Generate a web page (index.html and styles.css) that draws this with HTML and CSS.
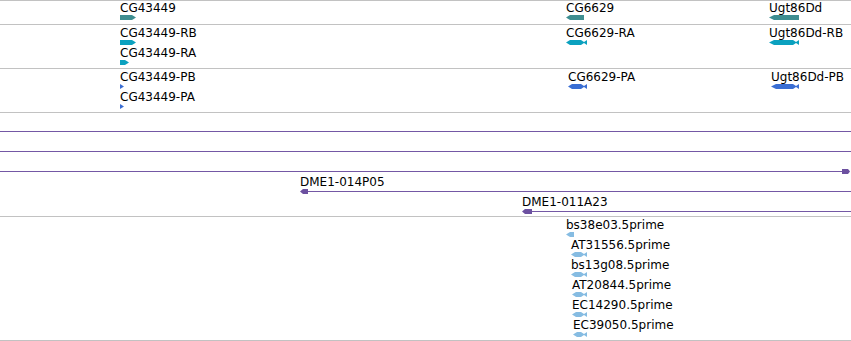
FILE: index.html
```html
<!DOCTYPE html>
<html>
<head>
<meta charset="utf-8">
<link rel="stylesheet" href="styles.css">
</head>
<body>
<div class="tracks">
  <!-- genes -->
  <div class="track rows1">
    <div class="feat" style="left:120px;top:0px">
      <div class="label">CG43449</div>
      <svg class="glyph gene" width="16" height="5"><polygon points="0,0 12,0 16,2.5 12,5 0,5"/></svg>
    </div>
    <div class="feat" style="left:566px;top:0px">
      <div class="label">CG6629</div>
      <svg class="glyph gene" width="18" height="5"><polygon points="0,2.5 4,0 18,0 18,5 4,5"/></svg>
    </div>
    <div class="feat" style="left:769px;top:0px">
      <div class="label">Ugt86Dd</div>
      <svg class="glyph gene" width="30" height="5"><polygon points="0,2.5 5,0 30,0 30,5 5,5"/></svg>
    </div>
  </div>
  <!-- transcripts -->
  <div class="track rows2">
    <div class="feat" style="left:120px;top:1px">
      <div class="label">CG43449-RB</div>
      <svg class="glyph mrna" width="16" height="5"><polygon points="0,0 12,0 16,2.5 12,5 0,5"/></svg>
    </div>
    <div class="feat" style="left:120px;top:21px">
      <div class="label">CG43449-RA</div>
      <svg class="glyph mrna" width="9" height="5"><polygon points="0,0 5,0 9,2.5 5,5 0,5"/></svg>
    </div>
    <div class="feat" style="left:566px;top:1px">
      <div class="label">CG6629-RA</div>
      <svg class="glyph mrna" width="21" height="5"><polygon points="0,2.5 4,0 15,0 18,2 21,0 21,5 18,3 15,5 4,5"/></svg>
    </div>
    <div class="feat" style="left:769px;top:1px">
      <div class="label">Ugt86Dd-RB</div>
      <svg class="glyph mrna" width="30" height="5"><polygon points="0,2.5 5,0 24,0 27,2 30,0 30,5 27,3 24,5 5,5"/></svg>
    </div>
  </div>
  <!-- proteins -->
  <div class="track rows2">
    <div class="feat" style="left:120px;top:1px">
      <div class="label">CG43449-PB</div>
      <svg class="glyph cds" width="4" height="5"><polygon points="0,0 4,2.5 0,5"/></svg>
    </div>
    <div class="feat" style="left:120px;top:21px">
      <div class="label">CG43449-PA</div>
      <svg class="glyph cds" width="4" height="5"><polygon points="0,0 4,2.5 0,5"/></svg>
    </div>
    <div class="feat" style="left:568px;top:1px">
      <div class="label">CG6629-PA</div>
      <svg class="glyph cds" width="19" height="5"><polygon points="0,2.5 4,0 13,0 16,2 19,0 19,5 16,3 13,5 4,5"/></svg>
    </div>
    <div class="feat" style="left:771px;top:1px">
      <div class="label">Ugt86Dd-PB</div>
      <svg class="glyph cds" width="28" height="5"><polygon points="0,2.5 5,0 22,0 25,2 28,0 28,5 25,3 22,5 5,5"/></svg>
    </div>
  </div>
  <!-- clones -->
  <div class="track rows5">
    <div class="feat span" style="left:0px;top:2px">
      <div class="label"></div>
      <div class="bar"><div class="rule"></div></div>
    </div>
    <div class="feat span" style="left:0px;top:22px">
      <div class="label"></div>
      <div class="bar"><div class="rule"></div></div>
    </div>
    <div class="feat span" style="left:0px;top:42px">
      <div class="label"></div>
      <div class="bar"><div class="rule"></div><svg class="clone" width="9" height="5"><polygon points="0,0 6,0 8,2.5 6,5 0,5"/></svg></div>
    </div>
    <div class="feat span" style="left:300px;top:62px">
      <div class="label">DME1-014P05</div>
      <div class="bar"><svg class="clone" width="8" height="5"><polygon points="0,2.5 3,0 8,0 8,5 3,5"/></svg><div class="rule"></div></div>
    </div>
    <div class="feat span" style="left:522px;top:82px">
      <div class="label">DME1-011A23</div>
      <div class="bar"><svg class="clone" width="10" height="5"><polygon points="0,2.5 3,0 10,0 10,5 3,5"/></svg><div class="rule"></div></div>
    </div>
  </div>
  <!-- ESTs -->
  <div class="track rows6">
    <div class="feat" style="left:566px;top:1px">
      <div class="label">bs38e03.5prime</div>
      <svg class="glyph est" width="8" height="5"><polygon points="0,2.5 4,0 8,0 8,5 4,5"/></svg>
    </div>
    <div class="feat" style="left:571px;top:21px">
      <div class="label">AT31556.5prime</div>
      <svg class="glyph est" width="16" height="5"><polygon points="0,2.5 4,0 10,0 13,2 16,0 16,5 13,3 10,5 4,5"/></svg>
    </div>
    <div class="feat" style="left:571px;top:41px">
      <div class="label">bs13g08.5prime</div>
      <svg class="glyph est" width="16" height="5"><polygon points="0,2.5 4,0 10,0 13,2 16,0 16,5 13,3 10,5 4,5"/></svg>
    </div>
    <div class="feat" style="left:572px;top:61px">
      <div class="label">AT20844.5prime</div>
      <svg class="glyph est" width="15" height="5"><polygon points="0,2.5 4,0 9,0 12,2 15,0 15,5 12,3 9,5 4,5"/></svg>
    </div>
    <div class="feat" style="left:572px;top:81px">
      <div class="label">EC14290.5prime</div>
      <svg class="glyph est" width="15" height="5"><polygon points="0,2.5 4,0 9,0 12,2 15,0 15,5 12,3 9,5 4,5"/></svg>
    </div>
    <div class="feat" style="left:573px;top:101px">
      <div class="label">EC39050.5prime</div>
      <svg class="glyph est" width="14" height="5"><polygon points="0,2.5 4,0 8,0 11,2 14,0 14,5 11,3 8,5 4,5"/></svg>
    </div>
  </div>
</div>
</body>
</html>
```
FILE: styles.css
```css
* {
  box-sizing: border-box;
}

html,
body {
  margin: 0;
  padding: 0;
  background: #ffffff;
}

body {
  width: 851px;
  height: 341px;
  overflow: hidden;
  font-family: "DejaVu Sans", "Noto Sans", sans-serif;
  font-size: 12px;
  color: #000000;
}

.tracks {
  display: flex;
  flex-direction: column;
  border-top: 1px solid #c2c2c2;
}

.track {
  position: relative;
  flex: none;
  border-bottom: 1px solid #c2c2c2;
}

.rows1 { height: 24px; }
.rows2 { height: 44px; }
.rows5 { height: 104px; }
.rows6 { height: 124px; }

.feat {
  position: absolute;
  display: flex;
  flex-direction: column;
  align-items: flex-start;
}

.feat.span {
  right: 0;
  align-items: stretch;
}

.label {
  height: 14px;
  line-height: 14px;
  white-space: nowrap;
}

.glyph {
  display: block;
}

.gene polygon { fill: #3e8e91; }
.mrna polygon { fill: #0ba1bf; }
.cds polygon { fill: #3a6ed3; }
.est polygon { fill: #86bce2; }

.bar {
  display: flex;
  align-items: center;
  height: 5px;
}

.rule {
  flex: 1;
  height: 1px;
  background: #7458a5;
}

.clone {
  display: block;
  flex: none;
}

.clone polygon { fill: #6c50a0; }
```
